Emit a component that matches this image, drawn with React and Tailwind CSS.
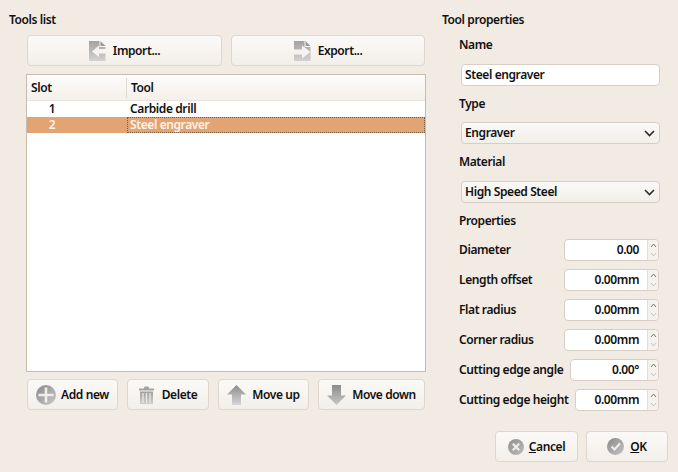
function G({ id, from = "#8f8f8f", to = "#d6d6d6", x2 = 0, y2 = 1 }) {
  return (
    <defs>
      <linearGradient id={id} x1="0" y1="0" x2={x2} y2={y2}>
        <stop offset="0" stopColor={from} />
        <stop offset="1" stopColor={to} />
      </linearGradient>
    </defs>
  );
}

function ImportIcon() {
  return (
    <svg width="17" height="20" viewBox="0 0 17 20" className="shrink-0">
      <G id="imp" from="#a2a2a2" to="#d2d2d2" />
      <path d="M0 0H10.5V6H16.5V20H0Z" fill="url(#imp)" />
      <path d="M11.5 0L16.5 5H11.5Z" fill="#9a9a9a" />
      <path d="M3 10.5L10 4.5V8H17V12.5H10V16Z" fill="#f6f3ef" />
    </svg>
  );
}

function ExportIcon() {
  return (
    <svg width="17" height="20" viewBox="0 0 17 20" className="shrink-0">
      <G id="exp" from="#a2a2a2" to="#d2d2d2" />
      <path d="M0 0H10.5V6H16.5V20H0Z" fill="url(#exp)" />
      <path d="M11.5 0L16.5 5H11.5Z" fill="#9a9a9a" />
      <path d="M0 8.5H8V4.5L16.5 11L8 17.5V13.5H0Z" fill="#f6f3ef" />
    </svg>
  );
}

function AddIcon() {
  return (
    <svg width="20" height="20" viewBox="0 0 20 20" className="shrink-0">
      <G id="add" from="#8a8a8a" to="#c9c9c9" x2="1" y2="1" />
      <circle cx="10" cy="10" r="10" fill="url(#add)" />
      <path d="M8.7 2.5H11.3V8.7H17.5V11.3H11.3V17.5H8.7V11.3H2.5V8.7H8.7Z" fill="#f2efeb" />
    </svg>
  );
}

function TrashIcon() {
  return (
    <svg width="15" height="18" viewBox="0 0 15 18" className="shrink-0">
      <G id="tr" from="#a0a0a0" to="#cfcfcf" />
      <path d="M5 1.5C5 0.3 10 0.3 10 1.5V2.5H15V4.5H0V2.5H5Z" fill="#a3a3a3" />
      <path d="M1 5.5H14V18H1Z" fill="url(#tr)" />
      <path d="M4 7V17M7.5 7V17M11 7V17" stroke="#eeeae5" strokeWidth="1.2" />
    </svg>
  );
}

function UpIcon() {
  return (
    <svg width="19" height="20" viewBox="0 0 19 20" className="shrink-0">
      <G id="up" from="#8c8c8c" to="#d6d6d6" />
      <path d="M9.5 0L19 9.5H14V20H5V9.5H0Z" fill="url(#up)" />
    </svg>
  );
}

function DownIcon() {
  return (
    <svg width="19" height="20" viewBox="0 0 19 20" className="shrink-0">
      <G id="down" from="#8c8c8c" to="#c8c8c8" />
      <path d="M5 0H14V10.5H19L9.5 20L0 10.5H5Z" fill="url(#down)" />
    </svg>
  );
}

function CancelIcon() {
  return (
    <svg width="16" height="16" viewBox="0 0 16 16" className="shrink-0">
      <G id="can" from="#8e8e8e" to="#bdbdbd" x2="1" y2="1" />
      <circle cx="8" cy="8" r="8" fill="url(#can)" />
      <path d="M4.8 4.8L11.2 11.2M11.2 4.8L4.8 11.2" stroke="#f0ede9" strokeWidth="2.2" />
    </svg>
  );
}

function OkIcon() {
  return (
    <svg width="17" height="17" viewBox="0 0 17 17" className="shrink-0">
      <G id="ok" from="#8a8a8a" to="#c4c4c4" x2="1" y2="1" />
      <circle cx="8.5" cy="8.5" r="8.5" fill="url(#ok)" />
      <path d="M4.5 8.5L7.5 11.5L13 5.5" fill="none" stroke="#f0ede9" strokeWidth="2.2" />
    </svg>
  );
}

function Btn({ className = "", children }) {
  return (
    <button className={"flex h-[31px] items-center justify-center rounded-[4px] border border-[#dfd7cd] bg-gradient-to-b from-[#fbf9f7] to-[#f3efea] text-[#111] " + className}>
      {children}
    </button>
  );
}

function Chevron() {
  return (
    <svg width="11" height="7" viewBox="0 0 11 7" className="shrink-0">
      <path d="M1 1L5.5 5.5L10 1" fill="none" stroke="#2b2b2b" strokeWidth="1.6" />
    </svg>
  );
}

function Select({ value, className = "" }) {
  return (
    <div className={"ml-[2px] flex h-[22px] w-[199px] items-center justify-between rounded-[4px] border border-[#d8cec3] bg-gradient-to-b from-[#fbf9f7] to-[#f2eee9] pl-[3px] pr-[4px] " + className}>
      <span>{value}</span>
      <Chevron />
    </div>
  );
}

function Spin({ label, value, inputClass }) {
  return (
    <div className="flex h-[22px] items-center justify-between">
      <span>{label}</span>
      <div className={"flex h-[22px] rounded-[4px] border border-[#d8cec3] bg-white " + inputClass}>
        <div className="flex flex-1 items-center justify-end pr-[8px]">{value}</div>
        <div className="flex w-[11px] flex-col items-center justify-between rounded-r-[4px] border-l border-[#e4ddd5] bg-[#f5f2ee] py-[3px]">
          <svg width="7" height="5" viewBox="0 0 7 5"><path d="M1 4L3.5 1L6 4" fill="none" stroke="#777" strokeWidth="1" /></svg>
          <svg width="7" height="5" viewBox="0 0 7 5"><path d="M1 1L3.5 4L6 1" fill="none" stroke="#c4c4c4" strokeWidth="1" /></svg>
        </div>
      </div>
    </div>
  );
}

export default function App() {
  return (
    <div className="flex h-[472px] w-[678px] overflow-hidden bg-[#f1ebe4] text-[12px] font-semibold leading-[14px] tracking-[-0.4px] text-[#111] [font-family:'Noto_Sans',sans-serif]">
      <div className="flex w-[442px] flex-col pl-[9px] pt-[13px]">
        <div>Tools list</div>
        <div className="ml-[17px] mt-[8px] flex w-[400px] flex-col">
          <div className="flex gap-[9px] px-[1px]">
            <Btn className="w-[195px] gap-[7px]"><ImportIcon />Import...</Btn>
            <Btn className="w-[194px] gap-[7px]"><ExportIcon />Export...</Btn>
          </div>
          <div className="mt-[8px] flex h-[298px] flex-col border border-[#c8bbad] bg-white">
            <div className="flex h-[26px] items-center border-b border-[#e9e3dc] bg-gradient-to-b from-[#fdfcfb] to-[#f4f0eb]">
              <div className="w-[99px] pl-[4px]">Slot</div>
              <div className="flex h-[20px] items-center border-l border-[#e2dbd3] pl-[4px]">Tool</div>
            </div>
            <div className="flex h-[16px] items-center">
              <div className="w-[50px] text-center">1</div>
              <div className="pl-[53px]">Carbide drill</div>
            </div>
            <div className="flex h-[16px] items-center bg-[#e3a473] text-[#fbf3ec]">
              <div className="w-[50px] text-center">2</div>
              <div className="ml-[50px] flex h-full flex-1 items-center border border-dotted border-[#7a5a3f] pl-[2px]">Steel engraver</div>
            </div>
          </div>
          <div className="mt-[7px] flex gap-[9px] px-[1px]">
            <Btn className="w-[91px] gap-[5px]"><AddIcon />Add new</Btn>
            <Btn className="w-[82px] gap-[8px]"><TrashIcon />Delete</Btn>
            <Btn className="w-[91px] gap-[6px]"><UpIcon />Move up</Btn>
            <Btn className="w-[107px] gap-[6px]"><DownIcon />Move down</Btn>
          </div>
        </div>
      </div>
      <div className="flex w-[236px] flex-col pt-[13px]">
        <div>Tool properties</div>
        <div className="ml-[17px] flex w-[200px] flex-col">
          <div className="mt-[11px]">Name</div>
          <div className="ml-[2px] mt-[12px] flex h-[22px] w-[199px] items-center rounded-[4px] border border-[#d8cec3] bg-white pl-[3px]">Steel engraver</div>
          <div className="mt-[11px]">Type</div>
          <Select value="Engraver" className="mt-[11px]" />
          <div className="mt-[11px]">Material</div>
          <Select value="High Speed Steel" className="mt-[12px]" />
          <div className="mt-[11px]">Properties</div>
          <div className="mt-[11px] flex flex-col gap-[8px]">
            <Spin label="Diameter" value="0.00" inputClass="w-[95px]" />
            <Spin label="Length offset" value="0.00mm" inputClass="w-[95px]" />
            <Spin label="Flat radius" value="0.00mm" inputClass="w-[95px]" />
            <Spin label="Corner radius" value="0.00mm" inputClass="w-[95px]" />
            <Spin label="Cutting edge angle" value="0.00°" inputClass="w-[89px]" />
            <Spin label="Cutting edge height" value="0.00mm" inputClass="w-[84px]" />
          </div>
        </div>
        <div className="ml-[53px] mt-[20px] flex gap-[8px]">
          <Btn className="w-[83px] gap-[5px]"><CancelIcon /><span><span className="underline">C</span>ancel</span></Btn>
          <Btn className="w-[82px] gap-[6px] border-[#d8c9ba] from-[#f7f0e9] to-[#f1e6db]"><OkIcon /><span><span className="underline">O</span>K</span></Btn>
        </div>
      </div>
    </div>
  );
}
